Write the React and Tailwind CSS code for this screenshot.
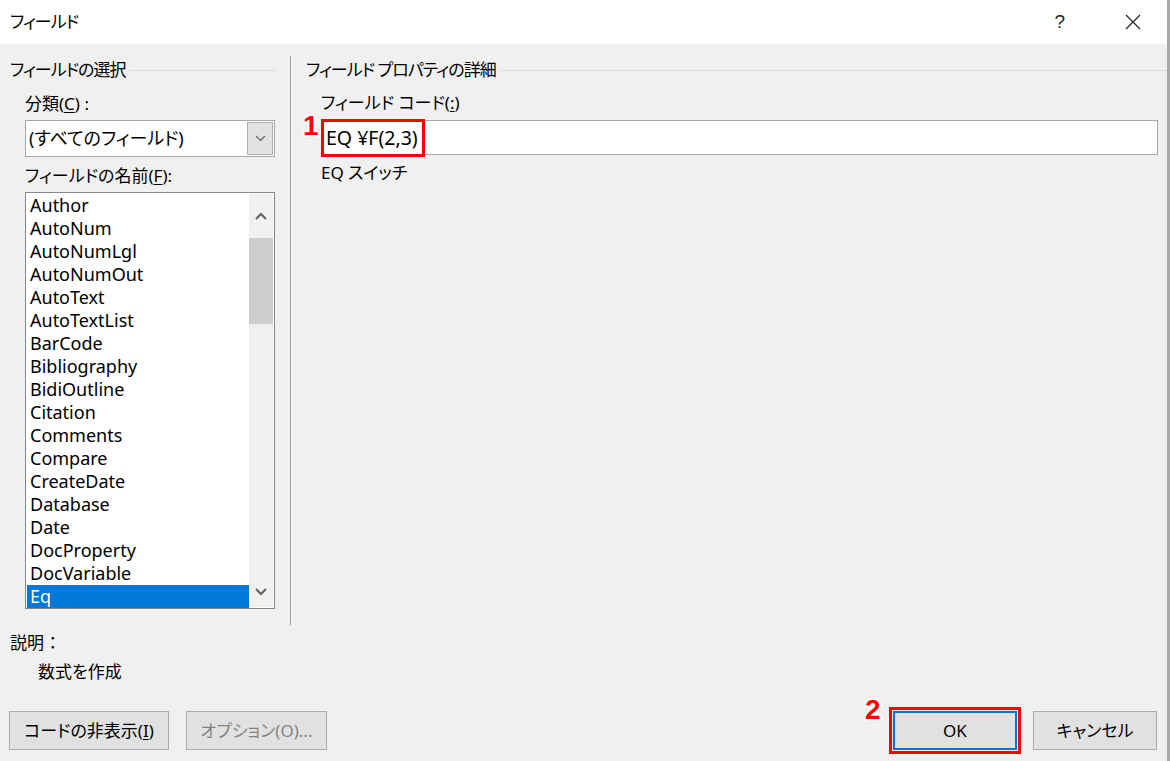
import { useState } from 'react'

const FIELDS = [
  'Author',
  'AutoNum',
  'AutoNumLgl',
  'AutoNumOut',
  'AutoText',
  'AutoTextList',
  'BarCode',
  'Bibliography',
  'BidiOutline',
  'Citation',
  'Comments',
  'Compare',
  'CreateDate',
  'Database',
  'Date',
  'DocProperty',
  'DocVariable',
  'Eq',
]

const FONT = "font-['Noto_Sans','Noto_Sans_CJK_JP',sans-serif] [font-feature-settings:'palt']"

export default function App() {
  const [selected, setSelected] = useState('Eq')

  return (
    <div className={`relative flex h-[761px] w-[1170px] flex-col overflow-hidden border-r-[3px] border-[#a8a8a8] bg-[#f0f0f0] text-[17px] text-black ${FONT}`}>
      {/* title bar */}
      <div className="flex h-[44px] shrink-0 items-center bg-white pl-[10px]">
        <span className="text-[17px] tracking-[-1px]">フィールド</span>
        <div className="ml-auto flex h-full items-center">
          <span className="mr-[60px] font-['Liberation_Sans',sans-serif] text-[19px] text-[#222]">?</span>
          <svg width="16" height="16" viewBox="0 0 16 16" className="mr-[26px]">
            <path d="M1 1 L15 15 M15 1 L1 15" stroke="#222" strokeWidth="1.2" />
          </svg>
        </div>
      </div>

      <div className="flex flex-1 flex-col">
        <div className="mt-[12px] flex h-[569px]">
          {/* left: field select */}
          <div className="w-[290px] shrink-0 pl-[10px] pr-[15px]">
            <GroupHeader title="フィールドの選択" />
            <div className="ml-[15px]">
              <div className="mt-[8px] h-[24px] leading-[24px]">
                分類(<span className="underline underline-offset-2">C</span>) :
              </div>
              <div className="mt-[4px] flex h-[37px] items-stretch border border-[#a6a6a6] bg-white">
                <div className="flex flex-1 items-center pl-[3px] text-[18px]">(すべてのフィールド)</div>
                <div className="my-[1px] mr-[1px] flex w-[26px] items-center justify-center border border-[#adadad] bg-[#e1e1e1]">
                  <svg width="11" height="7" viewBox="0 0 11 7">
                    <path d="M1 1 L5.5 5.5 L10 1" stroke="#606060" strokeWidth="1.2" fill="none" />
                  </svg>
                </div>
              </div>
              <div className="mt-[7px] h-[24px] leading-[24px]">
                フィールドの名前(<span className="underline underline-offset-2">F</span>):
              </div>
              <div className="mt-[4px] flex h-[417px] border border-[#828790] bg-white p-[1px]">
                <ul className="flex-1">
                  {FIELDS.map((f) => (
                    <li
                      key={f}
                      onClick={() => setSelected(f)}
                      className={`h-[23px] pl-[3px] text-[18px] leading-[23px] ${
                        selected === f ? 'bg-[#0078d7] text-white' : ''
                      }`}
                    >
                      {f}
                    </li>
                  ))}
                </ul>
                <div className="flex w-[24px] flex-col bg-[#f0f0f0]">
                  <div className="flex h-[44px] items-center justify-center">
                    <svg width="12" height="8" viewBox="0 0 12 8">
                      <path d="M1 7 L6 2 L11 7" stroke="#606060" strokeWidth="2" fill="none" />
                    </svg>
                  </div>
                  <div className="h-[86px] bg-[#cdcdcd]" />
                  <div className="flex-1" />
                  <div className="flex h-[30px] items-center justify-center">
                    <svg width="12" height="8" viewBox="0 0 12 8">
                      <path d="M1 1 L6 6 L11 1" stroke="#606060" strokeWidth="2" fill="none" />
                    </svg>
                  </div>
                </div>
              </div>
            </div>
          </div>

          {/* right: properties */}
          <div className="flex-1 border-l border-[#a0a0a0] pl-[15px]">
            <GroupHeader title="フィールド プロパティの詳細" />
            <div className="ml-[15px] mr-[9px]">
              <div className="mt-[7px] h-[24px] leading-[24px]">
                フィールド コード(<span className="underline underline-offset-2">:</span>)
              </div>
              <div className="relative mt-[5px] flex h-[35px] items-center border border-[#a6a6a6] bg-white pl-[4px] text-[19.5px]">
                EQ ¥F(2,3)
                <span className="pointer-events-none absolute -top-[2px] -left-[1px] h-[38px] w-[104px] border-[3px] border-[#ff0000]" />
                <Marker className="-left-[19px] -top-[9px]">1</Marker>
              </div>
              <div className="mt-[6px] h-[24px] leading-[24px]">EQ スイッチ</div>
            </div>
          </div>
        </div>

        {/* description */}
        <div className="pl-[10px]">
          <div className="mt-[6px] h-[24px] leading-[24px]">説明 ：</div>
          <div className="mt-[5px] h-[24px] pl-[28px] leading-[24px]">数式を作成</div>
        </div>

        {/* buttons */}
        <div className="mt-[27px] flex h-[39px] pl-[9px] pr-[10px]">
          <button className="w-[160px] border border-[#adadad] bg-[#e1e1e1] text-[17px]">
            コードの非表示(<span className="underline underline-offset-2">I</span>)
          </button>
          <button disabled className="ml-[17px] w-[141px] border border-[#adadad] bg-[#e1e1e1] text-[17px] text-[#838383]">
            オプション(O)...
          </button>
          <div className="relative ml-auto w-[124px]">
            <button className="h-full w-full border-2 border-[#0078d7] bg-[#e1e1e1] text-[17px]">OK</button>
            <span className="pointer-events-none absolute -inset-[4px] border-[3px] border-[#ff0000]" />
            <Marker className="-left-[28px] -top-[15px]">2</Marker>
          </div>
          <button className="ml-[16px] w-[124px] border border-[#adadad] bg-[#e1e1e1] text-[17px]">キャンセル</button>
        </div>
      </div>
    </div>
  )
}

function GroupHeader({ title }) {
  return (
    <div className="flex h-[28px] items-center">
      <span className="whitespace-nowrap pr-[4px] tracking-[-1px]">{title}</span>
      <div className="h-px flex-1 bg-[#dcdcdc]" />
    </div>
  )
}

function Marker({ className = '', children }) {
  return (
    <span
      className={`pointer-events-none absolute font-['Liberation_Sans',sans-serif] text-[28px] leading-none font-bold text-[#ff0000] [text-shadow:-1px_-1px_0_#fff,1px_-1px_0_#fff,-1px_1px_0_#fff,1px_1px_0_#fff,0_2px_0_#fff,2px_0_0_#fff,-2px_0_0_#fff,0_-2px_0_#fff] ${className}`}
    >
      {children}
    </span>
  )
}
